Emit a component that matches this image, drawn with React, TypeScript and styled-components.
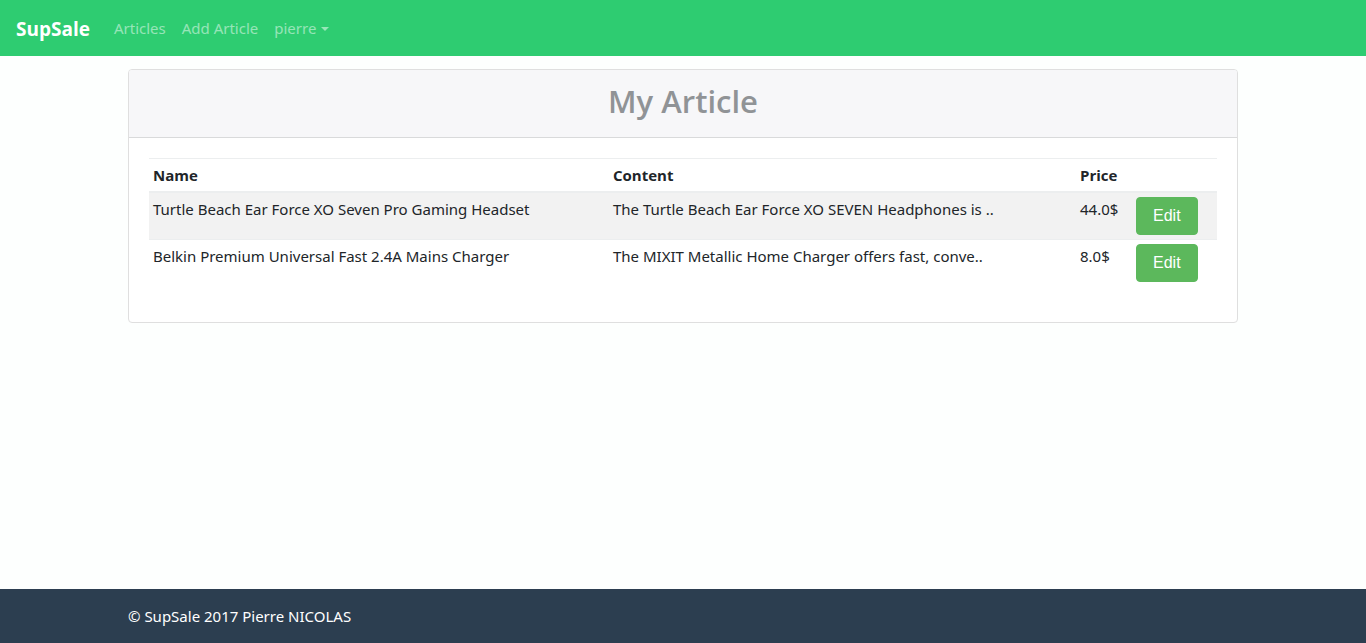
import React from 'react';
import styled, { createGlobalStyle } from 'styled-components';

const GlobalStyle = createGlobalStyle`
  *, *::before, *::after { box-sizing: border-box; }
  body {
    margin: 0;
    background: #fdfffe;
    color: #212529;
    font-family: "Segoe UI", "Noto Sans", "Open Sans", sans-serif;
    font-size: 15px;
    line-height: 24px;
  }
`;

const Page = styled.div`
  display: flex;
  flex-direction: column;
  min-height: 100vh;
`;

const Navbar = styled.nav`
  display: flex;
  align-items: center;
  gap: 16px;
  height: 56px;
  padding: 0 16px;
  background: #2ecc71;
`;

const Brand = styled.a`
  padding-top: 2px;
  color: #fff;
  font-family: "Segoe UI", "Open Sans", sans-serif;
  font-size: 19px;
  font-weight: 700;
  line-height: 30px;
  text-decoration: none;
`;

const NavList = styled.ul`
  display: flex;
  margin: 0;
  padding: 0;
  list-style: none;
`;

const NavLink = styled.a<{ $dropdown?: boolean }>`
  display: block;
  padding: 8px;
  color: rgba(255, 255, 255, 0.5);
  text-decoration: none;

  &::after {
    content: "";
    display: ${(p) => (p.$dropdown ? 'inline-block' : 'none')};
    margin-left: 5px;
    vertical-align: 3px;
    border-top: 4px solid;
    border-right: 4px solid transparent;
    border-left: 4px solid transparent;
  }
`;

const Container = styled.div`
  width: 100%;
  max-width: 1140px;
  margin: 0 auto;
  padding: 0 15px;
`;

const Main = styled.main`
  flex: 1;
  padding: 13px 0;
`;

const Card = styled.section`
  border: 1px solid #dfdfdf;
  border-radius: 4px;
  background: #fff;
  overflow: hidden;
`;

const CardHeader = styled.header`
  padding: 12px 20px 16px;
  border-bottom: 1px solid #d9dadb;
  background: #f7f7f9;
  text-align: center;
`;

const Title = styled.h1`
  margin: 0;
  color: #909396;
  font-family: "Segoe UI", "Open Sans", sans-serif;
  font-size: 31px;
  font-weight: 600;
  line-height: 39px;
`;

const CardBody = styled.div`
  padding: 20px 20px 36px;
`;

const Table = styled.table`
  width: 100%;
  table-layout: fixed;
  border-spacing: 0;
`;

const Column = styled.col<{ $width: string }>`
  width: ${(p) => p.$width};
`;

const HeadCell = styled.th`
  padding: 4px;
  border-top: 1px solid #eceeef;
  border-bottom: 2px solid #eceeef;
  font-family: "Segoe UI", "Open Sans", sans-serif;
  font-weight: 700;
  text-align: left;
`;

const Row = styled.tr`
  &:nth-child(odd) {
    background: #f2f2f2;
  }
`;

const Cell = styled.td`
  padding: 4px;
  vertical-align: top;

  ${Row} + ${Row} & {
    border-top: 1px solid #eceeef;
  }
`;

const EditButton = styled.button`
  display: block;
  padding: 6px 16px;
  border: 1px solid #5cb85c;
  border-radius: 4px;
  background: #5cb85c;
  color: #fff;
  font-family: "Liberation Sans", Arial, sans-serif;
  font-size: 16px;
  line-height: 24px;
  cursor: pointer;
`;

const Footer = styled.footer`
  padding: 15px 0;
  background: #2c3e50;
  color: #fff;
`;

const articles = [
  {
    name: 'Turtle Beach Ear Force XO Seven Pro Gaming Headset',
    content: 'The Turtle Beach Ear Force XO SEVEN Headphones is ..',
    price: '44.0$',
  },
  {
    name: 'Belkin Premium Universal Fast 2.4A Mains Charger',
    content: 'The MIXIT Metallic Home Charger offers fast, conve..',
    price: '8.0$',
  },
];

export default function App() {
  return (
    <Page>
      <GlobalStyle />
      <Navbar>
        <Brand href="#">SupSale</Brand>
        <NavList>
          <li><NavLink href="#articles">Articles</NavLink></li>
          <li><NavLink href="#add">Add Article</NavLink></li>
          <li><NavLink href="#account" $dropdown>pierre</NavLink></li>
        </NavList>
      </Navbar>
      <Main>
        <Container>
          <Card>
            <CardHeader>
              <Title>My Article</Title>
            </CardHeader>
            <CardBody>
              <Table>
                <colgroup>
                  <Column $width="460px" />
                  <Column $width="auto" />
                  <Column $width="56px" />
                  <Column $width="85px" />
                </colgroup>
                <thead>
                  <tr>
                    <HeadCell scope="col">Name</HeadCell>
                    <HeadCell scope="col">Content</HeadCell>
                    <HeadCell scope="col">Price</HeadCell>
                    <HeadCell scope="col" aria-label="Actions" />
                  </tr>
                </thead>
                <tbody>
                  {articles.map((article) => (
                    <Row key={article.name}>
                      <Cell>{article.name}</Cell>
                      <Cell>{article.content}</Cell>
                      <Cell>{article.price}</Cell>
                      <Cell><EditButton type="button">Edit</EditButton></Cell>
                    </Row>
                  ))}
                </tbody>
              </Table>
            </CardBody>
          </Card>
        </Container>
      </Main>
      <Footer>
        <Container>© SupSale 2017 Pierre NICOLAS</Container>
      </Footer>
    </Page>
  );
}
